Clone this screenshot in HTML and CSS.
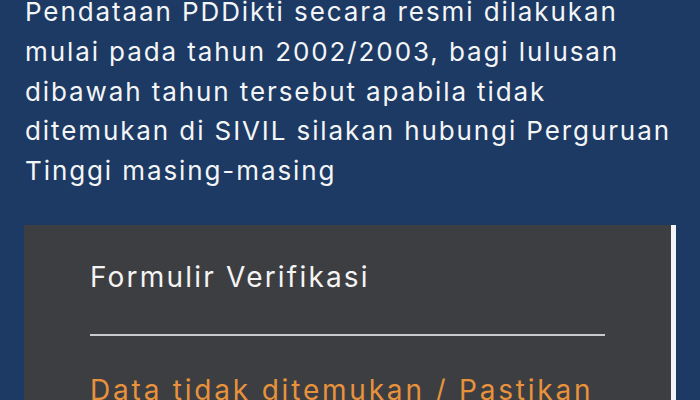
FILE: index.html
```html
<!DOCTYPE html>
<html lang="id">
<head>
<meta charset="utf-8">
<title>Verifikasi</title>
<link rel="stylesheet" href="styles.css">
</head>
<body>
<main class="page">
  <p class="intro">Pendataan PDDikti secara resmi dilakukan<br>mulai pada tahun 2002/2003, bagi lulusan<br>dibawah tahun tersebut apabila tidak<br>ditemukan di SIVIL silakan hubungi Perguruan<br>Tinggi masing-masing</p>
  <section class="card">
    <h2 class="card-title">Formulir Verifikasi</h2>
    <hr class="card-rule">
    <p class="card-alert">Data tidak ditemukan / Pastikan</p>
  </section>
</main>
</body>
</html>
```
FILE: styles.css
```css
html, body {
  margin: 0;
  padding: 0;
  background: #1c3a63;
  overflow: hidden;
}
.page {
  font-family: "Inter", "Open Sans", sans-serif;
  padding: 0 24px;
}
.intro {
  margin: -8px 0 0 1px;
  color: #f4f5f7;
  font-size: 26px;
  line-height: 39.75px;
  letter-spacing: 1.9px;
  white-space: nowrap;
}
.card {
  margin-top: 34px;
  width: 652px;
  background: #3d3e41;
  border-right: 5px solid #f2f4f7;
  padding: 32px 66px 0;
  box-sizing: border-box;
  height: 300px;
}
.card-title {
  margin: 0;
  color: #f4f4f4;
  font-weight: 400;
  font-size: 28px;
  letter-spacing: 2.2px;
  line-height: 40px;
}
.card-rule {
  margin: 37px 0 0;
  border: 0;
  height: 2px;
  background: #c9cacc;
}
.card-alert {
  margin: 34px 0 0;
  color: #e8923c;
  font-size: 28px;
  letter-spacing: 2.8px;
  line-height: 40px;
  white-space: nowrap;
}
```
